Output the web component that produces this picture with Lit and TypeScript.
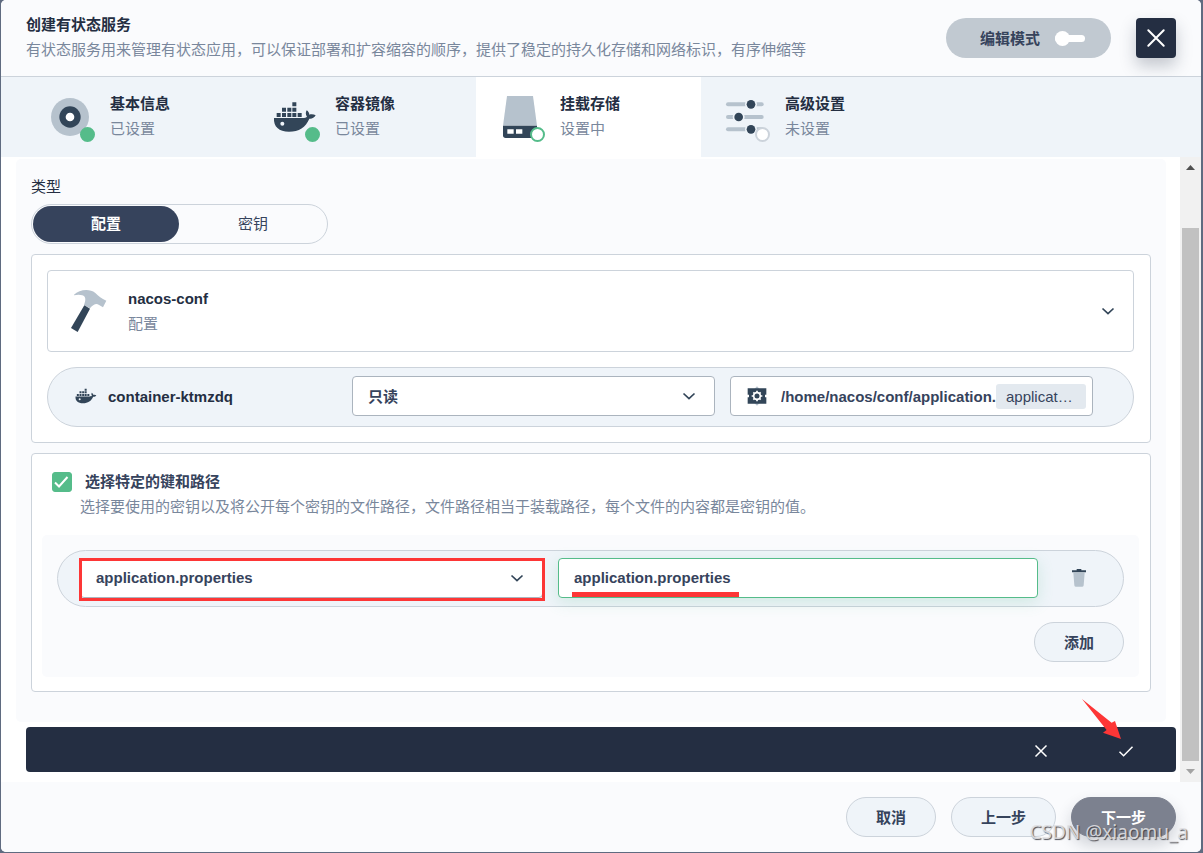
import { LitElement, html, css, svg, nothing } from "lit";
import { customElement, state } from "lit/decorators.js";
import { classMap } from "lit/directives/class-map.js";

const dockerIcon = (size: number) => html`
  <svg class="icon" width=${size} height=${size} viewBox="0 0 144 144" fill="#324558" aria-hidden="true">
    <path d="M64 28h12v12H64zM33 44h12v12H33zM49 44h12v12H49zM64 44h12v12H64zM17 60h12v12H17zM33 60h12v12H33zM49 60h12v12H49zM64 60h12v12H64zM80 60h12v12H80z"/>
    <path d="M9 75H94C101 75 106 73 108 71C104 66 103 59 107 52C112 55 115 60 115 65C121 63 129 64 134 67C130 75 122 78 115 77C104 103 84 116 54 116C24 116 7 101 9 75Z"/>
    <circle cx="34" cy="92" r="6" fill="#eff4f9"/>
  </svg>`;

const baseIcon = html`
  <svg class="icon" width="48" height="48" viewBox="0 0 144 144" aria-hidden="true">
    <circle cx="72" cy="72" r="57" fill="#b6c2cd"/>
    <circle cx="72" cy="72" r="32" fill="#324558"/>
    <circle cx="72" cy="72" r="13" fill="#fff"/>
  </svg>`;

const storageIcon = html`
  <svg class="icon" width="48" height="48" viewBox="0 0 144 144" aria-hidden="true">
    <path d="M33 9H111L123 98H21Z" fill="#b6c2cd"/>
    <path d="M21 98H123V127Q123 135 115 135H29Q21 135 21 127Z" fill="#324558"/>
    <path d="M34 109h19v13H34zM60 109h19v13H60z" fill="#fff"/>
  </svg>`;

const slidersIcon = html`
  <svg class="icon" width="48" height="48" viewBox="0 0 144 144" aria-hidden="true">
    ${[[34, 90], [72, 53], [109, 90]].map(
      ([y, x]) => svg`
        <line x1="21" x2="122" y1=${y} y2=${y} stroke="#b6c2cd" stroke-width="12" stroke-linecap="round"/>
        <circle cx=${x} cy=${y} r="18" fill="#eff4f9"/>
        <circle cx=${x} cy=${y} r="13" fill="#324558"/>`
    )}
  </svg>`;

const hammerIcon = html`
  <svg class="icon" width="48" height="48" viewBox="0 0 144 144" aria-hidden="true">
    <path d="M30 23C45 9 75 3 94 18C104 28 112 34 127 41L117 61L104 53C96 48 86 54 78 64L60 54C66 40 66 28 55 25C47 22 38 23 30 25Z" fill="#b6c2cd"/>
    <path d="M61 55L78 65L41 135L21 123Z" fill="#324558"/>
  </svg>`;

const gearIcon = html`
  <svg class="icon" width="20" height="20" viewBox="0 0 60 60" aria-hidden="true">
    <path d="M30 1L38 9H22ZM30 59L38 51H22Z" fill="#b6c2cd"/>
    <path d="M2 7H58V26H54V34H58V53H2V34H6V26H2Z" fill="#324558"/>
    <g stroke="#fff" fill="none">
      <circle cx="30" cy="30" r="10" stroke-width="5"/>
      <path d="M30 14v6M30 40v6M14 30h6M40 30h6M19 19l4 4M37 37l4 4M41 19l-4 4M23 37l-4 4" stroke-width="5"/>
    </g>
  </svg>`;

const trashIcon = html`
  <svg class="icon" width="16" height="20" viewBox="0 0 48 60" aria-hidden="true">
    <path d="M7 14H41L38 52Q38 56 34 56H14Q10 56 10 52Z" fill="#b6c2cd"/>
    <path d="M3 7H17V3H31V7H45V13H3Z" fill="#324558"/>
  </svg>`;

const chevron = html`
  <svg class="chevron" width="20" height="20" viewBox="0 0 20 20" fill="none" stroke="#324558" stroke-width="1.7" aria-hidden="true">
    <path d="M4.5 7.5L10 12.7L15.5 7.5"/>
  </svg>`;

interface Step {
  title: string;
  status: string;
  mark: "done" | "current" | "todo";
  icon: unknown;
}

const steps: Step[] = [
  { title: "基本信息", status: "已设置", mark: "done", icon: baseIcon },
  { title: "容器镜像", status: "已设置", mark: "done", icon: dockerIcon(48) },
  { title: "挂载存储", status: "设置中", mark: "current", icon: storageIcon },
  { title: "高级设置", status: "未设置", mark: "todo", icon: slidersIcon },
];

@customElement("app-root")
export class AppRoot extends LitElement {
  @state() private kind = "配置";
  @state() private specific = true;

  static styles = css`
    :host {
      display: block;
      box-sizing: border-box;
      min-height: 100vh;
      padding: 0 2px 1px 1px;
      background: #5f6b80;
      color: #242e42;
      font-family: "Liberation Sans", "Noto Sans CJK SC", sans-serif;
      font-size: 15px;
      line-height: 25px;
    }
    *, *::before, *::after { box-sizing: border-box; }
    button, input, select { font: inherit; color: inherit; margin: 0; }
    button { cursor: pointer; border: 0; padding: 0; background: none; }
    p, h1 { margin: 0; font-size: 15px; }
    .icon, .chevron { display: block; flex: none; }
    .strong { font-weight: 600; }
    .muted { color: #79879c; }

    .modal {
      position: relative;
      display: flex;
      flex-direction: column;
      min-height: calc(100vh - 1px);
      background: #fff;
      border-radius: 5px;
      overflow: hidden;
    }
    .header {
      display: flex;
      align-items: center;
      gap: 25px;
      height: 77px;
      padding: 0 25px;
      background: #fafbfd;
      border-bottom: 1px solid #ccd3db;
    }
    .heading { flex: 1; }
    .heading, .step-text { padding-bottom: 2px; }
    .mode {
      display: flex;
      align-items: center;
      gap: 15px;
      height: 40px;
      padding: 0 26px 0 34px;
      border-radius: 20px;
      background: #c1c9d1;
      color: #36435c;
      font-weight: 600;
    }
    .knob {
      display: flex;
      align-items: center;
      width: 30px;
      height: 7px;
      border-radius: 4px;
      background: #fff;
    }
    .knob::before {
      content: "";
      width: 15px;
      height: 15px;
      border-radius: 50%;
      background: #fff;
    }
    .close {
      display: grid;
      place-items: center;
      width: 40px;
      height: 40px;
      border-radius: 4px;
      background: #242e42;
      box-shadow: 0 8px 16px rgba(36, 46, 66, 0.25);
    }

    .steps {
      display: flex;
      height: 80px;
      padding-left: 25px;
      background: #eff4f9;
    }
    .step {
      display: flex;
      align-items: center;
      gap: 16px;
      width: 225px;
      padding-left: 20px;
      text-align: left;
    }
    .step.current { background: #fff; }
    .figure { position: relative; }
    .mark {
      position: absolute;
      right: -1px;
      bottom: -1px;
      width: 15px;
      height: 15px;
      border: 2px solid #55bc8a;
      border-radius: 50%;
      background: #fff;
    }
    .mark.done { background: #55bc8a; }
    .mark.todo { border-color: #ccd3db; }

    .body { display: flex; flex: 1; }
    .content { flex: 1; min-width: 0; padding: 2px 4px 10px 15px; }
    .panel {
      margin-right: 10px;
      padding: 15px 15px 30px;
      border-radius: 5px;
      background: #fafbfd;
    }
    .kinds {
      display: flex;
      gap: 1px;
      width: max-content;
      height: 40px;
      margin: 5px 0 10px;
      padding: 1px;
      border: 1px solid #ccd3db;
      border-radius: 20px;
    }
    .kind {
      width: 146px;
      padding-bottom: 2px;
      border-radius: 18px;
      color: #36435c;
    }
    .kind.on { background: #36435c; color: #fff; font-weight: 600; }

    .card {
      border: 1px solid #ccd3db;
      border-radius: 4px;
      background: #fff;
    }
    .card + .card { margin-top: 10px; }
    .volume { padding: 15px 16px 15px 15px; }
    .source {
      display: flex;
      align-items: center;
      gap: 16px;
      width: 100%;
      height: 82px;
      padding: 0 15px 0 16px;
      border: 1px solid #ccd3db;
      border-radius: 4px;
      text-align: left;
    }
    .source-text { flex: 1; }
    .row {
      display: grid;
      align-items: center;
      gap: 15px;
      border: 1px solid #ccd3db;
      border-radius: 30px;
      background: #eff4f9;
    }
    .mount {
      grid-template-columns: 263px 1fr 1fr;
      height: 60px;
      margin-top: 15px;
      padding: 0 40px 2px 26px;
    }
    .container { display: flex; align-items: center; gap: 10px; }
    .field {
      position: relative;
      display: flex;
      align-items: center;
      height: 40px;
      border: 1px solid #abb4be;
      border-radius: 4px;
      background: #fff;
      color: #36435c;
      font-weight: 600;
    }
    .field .chevron {
      position: absolute;
      right: 15px;
      pointer-events: none;
    }
    .field select, .field input {
      flex: 1;
      min-width: 0;
      height: 100%;
      padding: 0 15px;
      border: 0;
      outline: 0;
      background: none;
      appearance: none;
    }
    .path { padding: 0 6px 0 16px; }
    .path input { padding: 0 0 0 14px; }
    .chip {
      width: 90px;
      padding: 0 10px;
      border-radius: 3px;
      background: #e3e9ef;
      font-weight: 400;
      white-space: nowrap;
    }

    .keys { padding: 15px 11px 14px 10px; }
    .check {
      display: flex;
      align-items: center;
      gap: 13px;
      padding-left: 10px;
      color: #36435c;
      font-weight: 600;
    }
    .box { position: relative; display: grid; place-items: center; width: 20px; height: 20px; }
    .box input {
      width: 20px;
      height: 20px;
      appearance: none;
      border: 1px solid #abb4be;
      border-radius: 3px;
    }
    .box input:checked { background: #55bc8a; border-color: #55bc8a; }
    .box svg { position: absolute; pointer-events: none; }
    .hint { padding-left: 38px; }
    .items {
      margin-top: 16px;
      padding: 15px;
      border-radius: 5px;
      background: #fafbfd;
    }
    .item {
      grid-template-columns: 463fr 480fr 70px;
      height: 57px;
      padding: 0 0 2px 22px;
    }
    .field.active {
      border-color: #55bc8a;
      box-shadow: 0 4px 16px rgba(85, 188, 138, 0.2);
    }
    .boxed::after {
      content: "";
      position: absolute;
      inset: -1px -3px -4px -2px;
      border: 3px solid #fd3636;
      pointer-events: none;
    }
    .lined::after {
      content: "";
      position: absolute;
      left: 13px;
      bottom: 0;
      width: 167px;
      height: 5px;
      background: #fd3636;
    }
    .remove { display: grid; justify-items: center; width: 52px; }
    .actions { display: flex; justify-content: flex-end; gap: 15px; }
    .items .actions { margin-top: 15px; }
    .btn {
      min-width: 90px;
      height: 40px;
      padding: 0 29px;
      border: 1px solid #ccd3db;
      border-radius: 20px;
      background: #eff4f9;
      color: #36435c;
      font-weight: 600;
    }
    .btn.primary {
      border-color: #7c818f;
      background: #7c818f;
      color: #fff;
      box-shadow: 0 8px 16px rgba(36, 46, 66, 0.2);
    }

    .bar {
      position: relative;
      display: flex;
      justify-content: flex-end;
      align-items: center;
      gap: 65px;
      height: 45px;
      margin: 5px 0 0 10px;
      padding: 2px 40px 0 0;
      border-radius: 4px;
      background: #242e42;
    }
    .bar button { height: 20px; }
    .bar button svg { display: block; }
    .pointer { position: absolute; right: 54px; top: -28px; }

    .scrollbar {
      display: flex;
      flex-direction: column;
      width: 21px;
      background: #f1f1f1;
    }
    .arrow { display: grid; place-items: center; height: 21px; }
    .track { display: flex; flex: 1; padding: 50px 2px 0; }
    .thumb { flex: 1; background: #c1c1c1; }

    .footer { padding: 15px 25px; background: #fafbfd; }
    .watermark {
      position: absolute;
      right: 13px;
      bottom: 6px;
      color: rgba(225, 225, 228, 0.9);
      font-family: "Noto Sans", sans-serif;
      font-size: 19px;
      line-height: 28px;
      text-shadow: 1px 1px 1px rgba(60, 60, 66, 0.9);
      pointer-events: none;
    }
  `;

  private renderStep(step: Step) {
    return html`
      <button class=${classMap({ step: true, current: step.mark === "current" })} type="button">
        <span class="figure">${step.icon}<span class="mark ${step.mark}"></span></span>
        <span class="step-text">
          <p class="strong">${step.title}</p>
          <p class="muted">${step.status}</p>
        </span>
      </button>`;
  }

  private renderKind(name: string) {
    return html`
      <button
        type="button"
        class=${classMap({ kind: true, on: this.kind === name })}
        aria-pressed=${this.kind === name}
        @click=${() => (this.kind = name)}
      >${name}</button>`;
  }

  render() {
    return html`
      <div class="modal">
        <header class="header">
          <div class="heading">
            <h1 class="strong">创建有状态服务</h1>
            <p class="muted">有状态服务用来管理有状态应用，可以保证部署和扩容缩容的顺序，提供了稳定的持久化存储和网络标识，有序伸缩等</p>
          </div>
          <button class="mode" type="button" role="switch" aria-checked="false">编辑模式<span class="knob"></span></button>
          <button class="close" type="button" aria-label="关闭">
            <svg width="20" height="20" viewBox="0 0 20 20" stroke="#fff" stroke-width="2" stroke-linecap="round"><path d="M2.3 2.3L17.7 17.7M17.7 2.3L2.3 17.7"/></svg>
          </button>
        </header>

        <nav class="steps">${steps.map((s) => this.renderStep(s))}</nav>

        <div class="body">
          <main class="content">
            <section class="panel">
              <p>类型</p>
              <div class="kinds">${["配置", "密钥"].map((k) => this.renderKind(k))}</div>

              <div class="card volume">
                <button class="source" type="button">
                  ${hammerIcon}
                  <span class="source-text">
                    <p class="strong">nacos-conf</p>
                    <p class="muted">配置</p>
                  </span>
                  ${chevron}
                </button>
                <div class="row mount">
                  <div class="container">${dockerIcon(24)}<span class="strong">container-ktmzdq</span></div>
                  <div class="field">
                    <select aria-label="访问模式"><option>只读</option></select>${chevron}
                  </div>
                  <div class="field path">
                    ${gearIcon}
                    <input aria-label="挂载路径" .value=${"/home/nacos/conf/application."} />
                    <span class="chip">applicat…</span>
                  </div>
                </div>
              </div>

              <div class="card keys">
                <label class="check">
                  <span class="box">
                    <input type="checkbox" .checked=${this.specific}
                      @change=${(e: Event) => (this.specific = (e.target as HTMLInputElement).checked)} />
                    ${this.specific
                      ? html`<svg width="20" height="20" viewBox="0 0 20 20" fill="none" stroke="#fff" stroke-width="2"><path d="M3 10.5L7 14.5L15.5 5"/></svg>`
                      : nothing}
                  </span>
                  选择特定的键和路径
                </label>
                <p class="hint muted">选择要使用的密钥以及将公开每个密钥的文件路径，文件路径相当于装载路径，每个文件的内容都是密钥的值。</p>
                <div class="items">
                  <div class="row item">
                    <div class="field boxed">
                      <select aria-label="键"><option>application.properties</option></select>${chevron}
                    </div>
                    <div class="field active lined">
                      <input aria-label="文件路径" .value=${"application.properties"} />
                    </div>
                    <button class="remove" type="button" aria-label="删除">${trashIcon}</button>
                  </div>
                  <div class="actions"><button class="btn" type="button">添加</button></div>
                </div>
              </div>
            </section>

            <div class="bar">
              <button type="button" aria-label="取消">
                <svg width="20" height="20" viewBox="0 0 20 20" stroke="#fff" stroke-width="1.5"><path d="M4.5 4.5L15.5 15.5M15.5 4.5L4.5 15.5"/></svg>
              </button>
              <button type="button" aria-label="确定">
                <svg width="20" height="20" viewBox="0 0 20 20" fill="none" stroke="#fff" stroke-width="1.5"><path d="M3.5 10.8L7.6 14.7L16.5 5.7"/></svg>
              </button>
              <svg class="pointer" width="40" height="41" viewBox="0 0 40 41" fill="#fd3636" aria-hidden="true">
                <path d="M0 0L29.6 23.7L33 22L39 40L21 33.7L24.6 31Z"/>
              </svg>
            </div>
          </main>
          <div class="scrollbar" aria-hidden="true">
            <span class="arrow"><svg width="9" height="5" viewBox="0 0 9 5" fill="#505050"><path d="M4.5 0L9 5H0Z"/></svg></span>
            <span class="track"><span class="thumb"></span></span>
            <span class="arrow"><svg width="9" height="5" viewBox="0 0 9 5" fill="#a3a3a3"><path d="M0 0H9L4.5 5Z"/></svg></span>
          </div>
        </div>

        <footer class="footer actions">
          <button class="btn" type="button">取消</button>
          <button class="btn" type="button">上一步</button>
          <button class="btn primary" type="button">下一步</button>
        </footer>
        <span class="watermark">CSDN @xiaomu_a</span>
      </div>`;
  }
}
